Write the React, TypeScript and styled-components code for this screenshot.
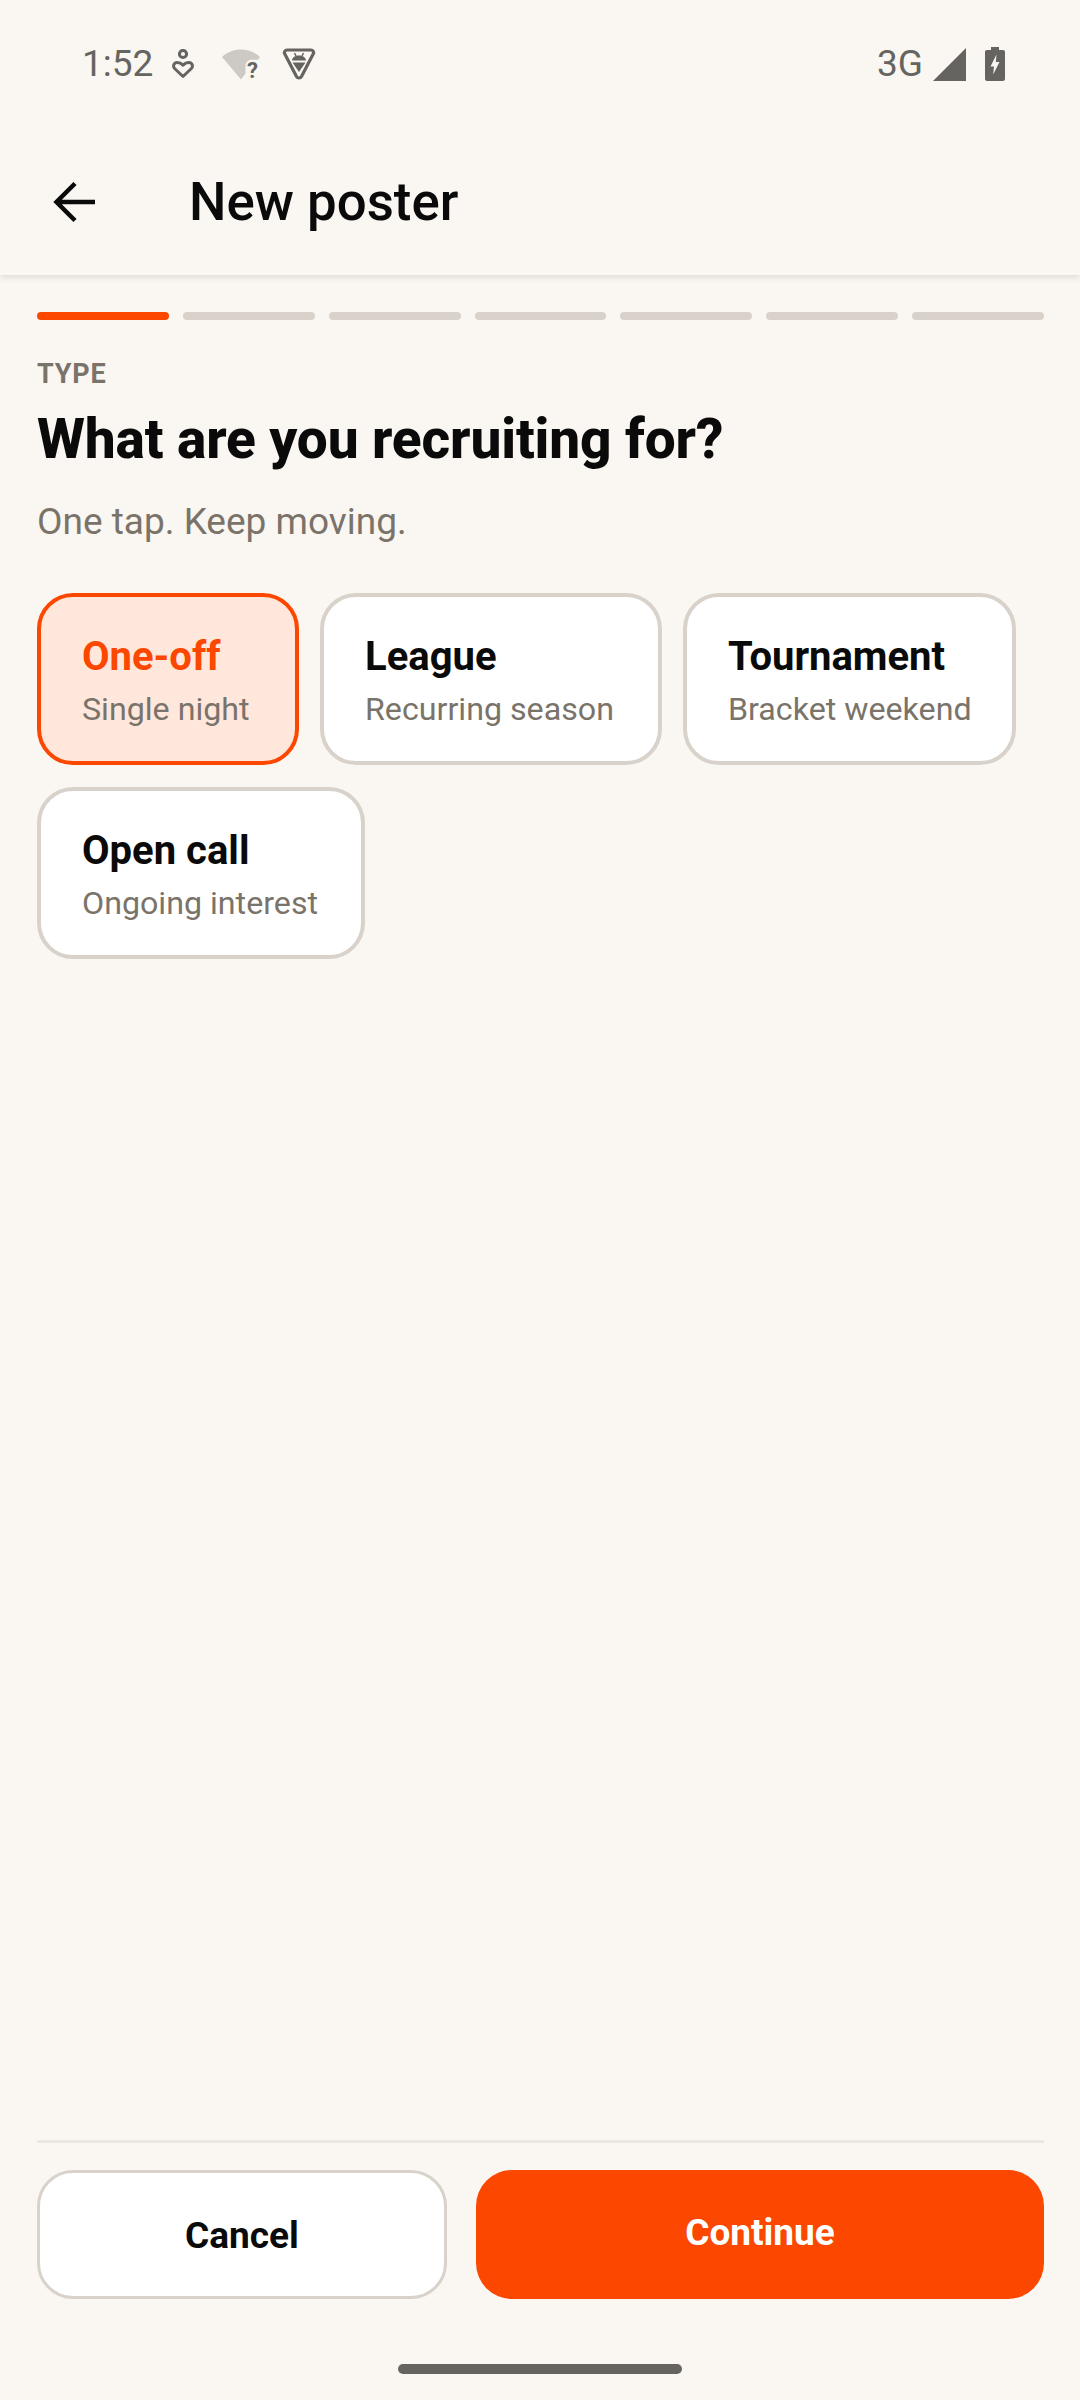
import styled, { createGlobalStyle } from "styled-components";

const GlobalStyle = createGlobalStyle`
  html, body {
    margin: 0;
    padding: 0;
    background: #faf7f2;
  }
  * {
    box-sizing: border-box;
  }
`;

const Screen = styled.div`
  position: relative;
  width: 1080px;
  height: 2400px;
  display: flex;
  flex-direction: column;
  background: #faf7f2;
  font-family: Roboto, "Liberation Sans", sans-serif;
  color: #0a0a0a;
`;

const StatusBar = styled.div`
  height: 128px;
  padding: 0 75px 0 82px;
  display: flex;
  align-items: center;
  justify-content: space-between;
  color: #666460;
`;

const StatusGroup = styled.div`
  display: flex;
  align-items: center;
`;

const StatusText = styled.span`
  font-size: 37px;
  line-height: 40px;
  white-space: nowrap;
`;

const StatusIcon = styled.svg<{ $gap: number }>`
  display: block;
  flex: none;
  margin-left: ${(p) => p.$gap}px;
`;

// taller box so the "?" glyph fits, pushed down to stay on the icon row
const WifiIcon = styled(StatusIcon)`
  margin-top: 6px;
`;

const Toolbar = styled.header`
  height: 147px;
  padding: 0 0 0 46px;
  display: flex;
  align-items: center;
  gap: 87px;
  box-shadow: 0 3px 6px rgba(60, 50, 40, 0.12);
  clip-path: inset(0 0 -14px 0);
`;

const BackButton = styled.button`
  width: 56px;
  height: 56px;
  padding: 0;
  border: 0;
  background: none;
  display: flex;
  align-items: center;
  justify-content: center;
`;

const ToolbarTitle = styled.h1`
  margin: 0;
  font-size: 52.8px;
  font-weight: 500;
  line-height: 60px;
`;

const Content = styled.main`
  flex: 1;
  padding: 37px 36px 0 37px;
`;

const Progress = styled.div`
  display: flex;
  gap: 14px;
`;

const Segment = styled.div<{ $active?: boolean }>`
  flex: 1;
  height: 8px;
  border-radius: 4px;
  background: ${(p) => (p.$active ? "#fc4700" : "#d9d2ca")};
`;

const Eyebrow = styled.div`
  margin-top: 40px;
  font-size: 27px;
  font-weight: 700;
  line-height: 28px;
  letter-spacing: 0.8px;
  color: #7a736a;
`;

const Heading = styled.h2`
  margin: 18px 0 0;
  font-size: 55px;
  font-weight: 800;
  line-height: 66px;
  letter-spacing: -0.14px;
`;

const Subtitle = styled.p`
  margin: 26px 0 0;
  font-size: 37px;
  line-height: 48px;
  color: #7a736a;
`;

const Options = styled.div`
  margin-top: 47px;
  display: flex;
  flex-wrap: wrap;
  gap: 22px 21px;
`;

const OptionCard = styled.button<{ $selected?: boolean; $width: number }>`
  width: ${(p) => p.$width}px;
  height: 172px;
  padding: 4px 0 0 41px;
  border: 4px solid ${(p) => (p.$selected ? "#fc4700" : "#d9d2ca")};
  border-radius: 36px;
  background: ${(p) => (p.$selected ? "#ffe7dc" : "#ffffff")};
  display: flex;
  flex-direction: column;
  align-items: flex-start;
  justify-content: center;
  font-family: inherit;
  white-space: nowrap;
`;

const OptionTitle = styled.span<{ $selected?: boolean }>`
  font-size: 40px;
  font-weight: 700;
  line-height: 50px;
  color: ${(p) => (p.$selected ? "#fc4700" : "#0a0a0a")};
`;

const OptionHint = styled.span`
  margin-top: 5px;
  font-size: 32.2px;
  line-height: 44px;
  color: #7a736a;
`;

const Footer = styled.footer`
  margin: 0 36px 101px 37px;
  padding-top: 27px;
  border-top: 3px solid #ece8e1;
  display: flex;
  gap: 29px;
`;

const CancelButton = styled.button`
  width: 410px;
  height: 129px;
  padding: 2px 0 0;
  border: 3px solid #d9d2ca;
  border-radius: 36px;
  background: #ffffff;
  font-family: inherit;
  font-size: 37px;
  font-weight: 700;
  color: #0a0a0a;
`;

const ContinueButton = styled.button`
  flex: 1;
  height: 129px;
  padding: 0 0 4px;
  border: 0;
  border-radius: 36px;
  background: #fc4700;
  font-family: inherit;
  font-size: 37px;
  font-weight: 700;
  color: #ffffff;
`;

const HomeIndicator = styled.div`
  position: absolute;
  left: 398px;
  bottom: 26px;
  width: 284px;
  height: 10px;
  border-radius: 5px;
  background: #666460;
`;

const options = [
  { title: "One-off", hint: "Single night", selected: true, width: 262 },
  { title: "League", hint: "Recurring season", width: 342 },
  { title: "Tournament", hint: "Bracket weekend", width: 333 },
  { title: "Open call", hint: "Ongoing interest", width: 328 },
];

export default function App() {
  return (
    <Screen>
      <GlobalStyle />
      <StatusBar>
        <StatusGroup>
          <StatusText>1:52</StatusText>
          <StatusIcon $gap={19} width="22" height="30" viewBox="0 0 22 30" fill="none" stroke="#666460" strokeWidth="3">
            <circle cx="11" cy="5" r="3.6" />
            <path d="M11 27.500 2.600 19.500c-2.200-2.400-.6-6 2.500-6 2.300 0 4.400 1 5.900 2.600 1.500-1.600 3.600-2.600 5.900-2.600 3.100 0 4.700 3.600 2.500 6Z" strokeLinejoin="round" />
          </StatusIcon>
          <WifiIcon $gap={28} width="38" height="36" viewBox="0 0 38 36">
            {/* wifi fan with a notch for the unknown-network mark */}
            <path d="M0 8C5 3 12 .5 19 .5S33 3 38 8l-2 2.800h-6c-4 0-6.500 2.500-6.500 6.500v7.200L19 30.500Z" fill="#cdcac5" />
            <text x="25" y="29" fontFamily="Roboto, sans-serif" fontSize="22" fontWeight="700" fill="#666460">?</text>
          </WifiIcon>
          <StatusIcon $gap={22} width="34" height="32" viewBox="0 0 34 32">
            <path d="M5 2h24c2 0 3.200 2 2.300 3.700L19.500 28.500c-1.100 2-3.900 2-5 0L2.700 5.700C1.800 4 3 2 5 2Z" fill="none" stroke="#666460" strokeWidth="3.200" strokeLinejoin="round" />
            <path d="M10 12.500c.4-3.400 3.200-5 7-5s6.600 1.600 7 5ZM10.500 14.500h13L17 24Z" fill="#666460" />
            <path d="m12.500 5 1.500 3M21.500 5 20 8" stroke="#666460" strokeWidth="1.500" />
          </StatusIcon>
        </StatusGroup>
        <StatusGroup>
          <StatusText>3G</StatusText>
          <StatusIcon $gap={10} width="33" height="33" viewBox="0 0 33 33">
            <path d="M33 0v33H0Z" fill="#666460" />
          </StatusIcon>
          <StatusIcon $gap={19} width="20" height="34" viewBox="0 0 20 34">
            <path d="M6 0h8v3h4c1.100 0 2 .9 2 2v27c0 1.100-.9 2-2 2H2c-1.100 0-2-.9-2-2V5c0-1.100.9-2 2-2h4Z" fill="#666460" />
            <path d="M11.500 7.500 5.500 19.500h3.500l-.8 8 6.300-12.500h-3.700Z" fill="#faf7f2" />
          </StatusIcon>
        </StatusGroup>
      </StatusBar>

      <Toolbar>
        <BackButton aria-label="Back">
          <svg width="44" height="44" viewBox="0 0 44 44" fill="none" stroke="#0a0a0a" strokeWidth="4.500">
            <path d="M43 22H5M23 3.500 4.500 22 23 40.500" />
          </svg>
        </BackButton>
        <ToolbarTitle>New poster</ToolbarTitle>
      </Toolbar>

      <Content>
        <Progress>
          {Array.from({ length: 7 }, (_, i) => (
            <Segment key={i} $active={i === 0} />
          ))}
        </Progress>
        <Eyebrow>TYPE</Eyebrow>
        <Heading>What are you recruiting for?</Heading>
        <Subtitle>One tap. Keep moving.</Subtitle>
        <Options>
          {options.map((o) => (
            <OptionCard key={o.title} $selected={o.selected} $width={o.width}>
              <OptionTitle $selected={o.selected}>{o.title}</OptionTitle>
              <OptionHint>{o.hint}</OptionHint>
            </OptionCard>
          ))}
        </Options>
      </Content>

      <Footer>
        <CancelButton>Cancel</CancelButton>
        <ContinueButton>Continue</ContinueButton>
      </Footer>
      <HomeIndicator />
    </Screen>
  );
}
